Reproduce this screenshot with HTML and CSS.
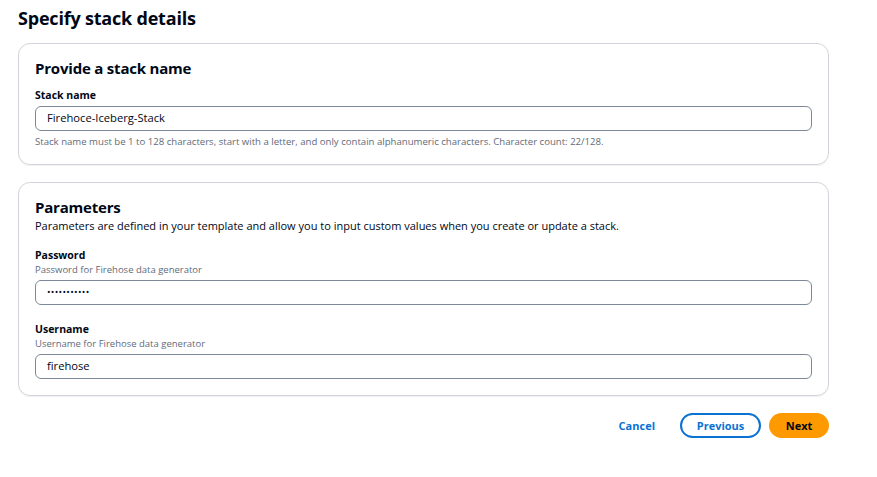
FILE: index.html
```html
<!DOCTYPE html>
<html lang="en">
<head>
<meta charset="utf-8">
<title>Specify stack details</title>
<link rel="stylesheet" href="styles.css">
</head>
<body>
<div class="page">
  <h1 class="title">Specify stack details</h1>

  <section class="card card-name">
    <h2 class="card-heading">Provide a stack name</h2>
    <div class="field">
      <label class="label">Stack name</label>
      <div class="input">Firehoce-Iceberg-Stack</div>
      <div class="hint">Stack name must be 1 to 128 characters, start with a letter, and only contain alphanumeric characters. Character count: 22/128.</div>
    </div>
  </section>

  <section class="card card-params">
    <h2 class="card-heading">Parameters</h2>
    <p class="card-desc">Parameters are defined in your template and allow you to input custom values when you create or update a stack.</p>
    <div class="field field-first">
      <label class="label">Password</label>
      <div class="field-desc">Password for Firehose data generator</div>
      <div class="input input-pw">•••••••••••</div>
    </div>
    <div class="field field-next">
      <label class="label">Username</label>
      <div class="field-desc">Username for Firehose data generator</div>
      <div class="input">firehose</div>
    </div>
  </section>

  <div class="actions">
    <button class="btn btn-link">Cancel</button>
    <button class="btn btn-normal">Previous</button>
    <button class="btn btn-primary">Next</button>
  </div>
</div>
</body>
</html>
```

FILE: styles.css
```css
* { box-sizing: border-box; }
body {
  margin: 0;
  background: #ffffff;
  color: #000716;
  font-family: "Open Sans", "Noto Sans", Arial, sans-serif;
}
.page {
  width: 829px;
  padding: 5px 0 0 18px;
}
.title {
  margin: 0;
  font-size: 18px;
  line-height: 26px;
  font-weight: 700;
  letter-spacing: -0.2px;
}
.card {
  border: 1px solid #d1d5db;
  border-radius: 12px;
  padding: 14px 16px 15px 16px;
  box-shadow: 0 1px 1px rgba(0, 7, 22, 0.06);
}
.card-name { margin-top: 12px; }
.card-params { margin-top: 17px; padding-top: 14px; padding-bottom: 16px; }
.card-heading {
  margin: 0;
  font-size: 15px;
  line-height: 20px;
  font-weight: 700;
  letter-spacing: -0.2px;
}
.card-desc {
  margin: 1px 0 0;
  font-size: 11px;
  line-height: 16px;
  color: #000716;
}
.field { display: flex; flex-direction: column; }
.card-name .field { margin-top: 9px; }
.field-first { margin-top: 13px; }
.field-next { margin-top: 16px; }
.label {
  font-size: 10.5px;
  line-height: 16px;
  font-weight: 700;
}
.field-desc {
  font-size: 9.5px;
  line-height: 14px;
  color: #5f6b7a;
}
.input {
  margin-top: 3px;
  height: 25px;
  border: 1.5px solid #7d8998;
  border-radius: 6px;
  padding: 0 11px;
  font-size: 11.2px;
  line-height: 22px;
  color: #000716;
}
.field-desc + .input { margin-top: 3px; }
.input-pw { font-size: 9.5px; letter-spacing: 0.3px; }
.hint {
  margin-top: 4px;
  font-size: 9.6px;
  line-height: 14px;
  color: #5f6b7a;
}
.actions {
  display: flex;
  justify-content: flex-end;
  align-items: center;
  gap: 8px;
  margin-top: 17px;
}
.btn {
  font-family: inherit;
  font-size: 11px;
  font-weight: 700;
  height: 25px;
  border-radius: 13px;
  cursor: pointer;
}
.btn-link {
  background: none;
  border: none;
  color: #0972d3;
  padding: 0 9px;
  margin-right: 8px;
}
.btn-normal {
  width: 81px;
  background: #ffffff;
  border: 2px solid #0972d3;
  color: #0972d3;
}
.btn-primary {
  width: 60px;
  background: #ff9900;
  border: 2px solid #ff9900;
  color: #000716;
}
```
